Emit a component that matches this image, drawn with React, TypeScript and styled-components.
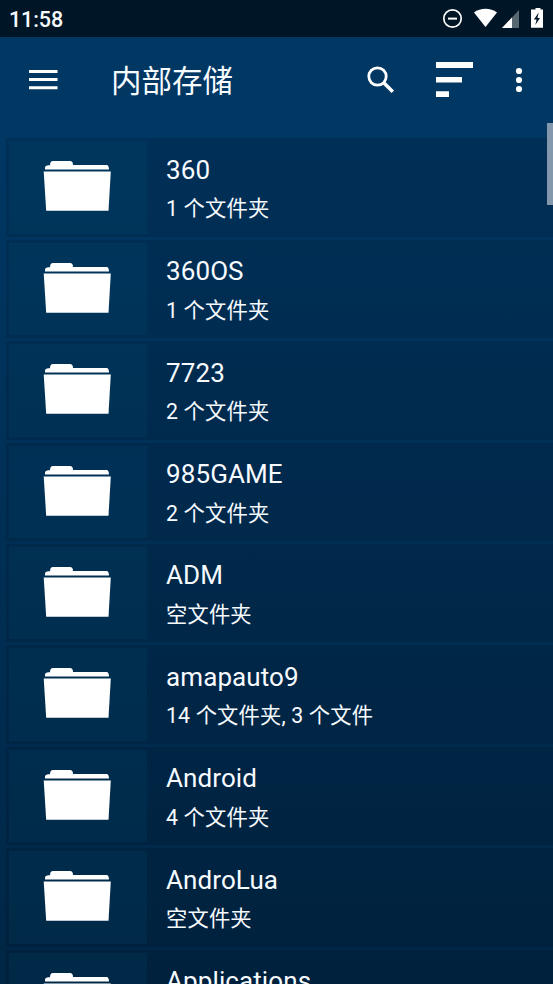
import React from "react";
import styled, { createGlobalStyle } from "styled-components";

const Global = createGlobalStyle`
  * { box-sizing: border-box; }
  html, body { margin: 0; padding: 0; overflow: hidden; }
  body { font-family: Roboto, "Noto Sans CJK SC", sans-serif; color: #f7fbff; }
  svg { display: block; }
`;

const Screen = styled.div`
  width: 553px;
  height: 984px;
  overflow: hidden;
  display: flex;
  flex-direction: column;
  position: relative;
  background: linear-gradient(180deg, #003763 0, #003763 130px, #002645 984px);
`;

const StatusBar = styled.header`
  height: 37px;
  flex: none;
  display: flex;
  align-items: center;
  justify-content: space-between;
  padding-left: 9px;
  background: #001626;
`;

const Clock = styled.span`
  font-size: 21.5px;
  font-weight: 500;
  line-height: 37px;
  letter-spacing: -0.1px;
  padding-top: 1px;
`;

const Toolbar = styled.nav`
  height: 86px;
  flex: none;
  display: flex;
  align-items: center;
  background: #003763;
`;

const Title = styled.h1`
  flex: 1;
  margin: 0;
  padding: 3px 0 0 53px;
  font-size: 30.5px;
  line-height: 44px;
  font-weight: 400;
`;

const IconButton = styled.button<{ $left?: number }>`
  border: 0;
  padding: 0;
  background: none;
  color: #fff;
  margin-left: ${(p) => p.$left ?? 0}px;
`;

const List = styled.main`
  flex: 1;
  min-height: 0;
  overflow: hidden;
  padding: 15.400px 0 0 6px;
`;

const Row = styled.section`
  height: 101.4px;
  padding-bottom: 3px;
`;

const Card = styled.div`
  height: 100%;
  display: flex;
  padding: 3px 0 3px 3px;
  background: rgba(0, 10, 20, 0.15);
`;

const Tile = styled.div`
  width: 138px;
  flex: none;
  padding: 20px 0 0 34px;
  background: rgba(0, 100, 140, 0.13);
`;

const Info = styled.div`
  padding-left: 19px;
`;

const Name = styled.div`
  font-size: 26px;
  line-height: 32px;
  margin-top: 12.5px;
  letter-spacing: 0.1px;
`;

const Detail = styled.div`
  font-size: 21.3px;
  line-height: 30px;
  margin-top: 8.500px;
  letter-spacing: 0.15px;
  white-space: pre;
`;

const ScrollThumb = styled.div`
  position: absolute;
  right: 0;
  top: 123px;
  width: 6px;
  height: 82px;
  background: #8398ad;
`;

const StatusIcons = () => (
  <svg width="123" height="37" viewBox="0 0 123 37" fill="#fff">
    <circle cx="22.5" cy="18.5" r="8.7" fill="none" stroke="#fff" strokeWidth="1.7" />
    <path d="M18 17.6h9v2h-9z" />
    <path d="M44 12.4C50.5 7.5 60.500 7.500 67 12.400L55.500 27z" />
    <path d="M72 28 89 10v18z" opacity=".35" />
    <path d="M72 28 82 17.400V28z" />
    <path d="M105.500 9.500H101v18.300h12V9.500h-2.500V8h-5z" />
    <path d="M108.700 12.500 103.900 19.400h2.700L105.300 25l4.700-7h-2.600z" fill="#001626" />
  </svg>
);

const MenuIcon = () => (
  <svg width="29" height="20" viewBox="0 0 29 20" fill="currentColor">
    <path d="M0 0h28.500v3H0zM0 8h28.500v3H0zM0 16.200h28.500v3H0z" />
  </svg>
);

const SearchIcon = () => (
  <svg width="28" height="28" viewBox="0 0 28 28" fill="none" stroke="currentColor">
    <circle cx="10.500" cy="10.500" r="8.700" strokeWidth="2.800" />
    <path d="m16.500 16.500 9.300 9.300" strokeWidth="3.500" />
  </svg>
);

const SortIcon = () => (
  <svg width="37" height="36" viewBox="0 0 37 36" fill="currentColor">
    <path d="M0 0h37v6H0zM0 15h26v5.500H0zM0 29.200h13V35H0z" />
  </svg>
);

const MoreIcon = () => (
  <svg width="8" height="26" viewBox="0 0 8 26" fill="currentColor">
    <circle cx="4" cy="4" r="3.100" />
    <circle cx="4" cy="13" r="3.100" />
    <circle cx="4" cy="22" r="3.100" />
  </svg>
);

const FolderIcon = () => (
  <svg width="69" height="51" viewBox="0 0 69 51" fill="#fff">
    <path d="M2 8.600V6.500Q2 4.700 5 4.300H7Q7 0 10 0H27Q30 0 30 4H63.500Q66 4.200 66 8.600z" />
    <path d="M.7 10.500H67.800L65.500 49.700H3.200z" />
  </svg>
);

const folders: { name: string; detail?: string }[] = [
  { name: "360", detail: "1 个文件夹" },
  { name: "360OS", detail: "1 个文件夹" },
  { name: "7723", detail: "2 个文件夹" },
  { name: "985GAME", detail: "2 个文件夹" },
  { name: "ADM", detail: "空文件夹" },
  { name: "amapauto9", detail: "14 个文件夹, 3 个文件" },
  { name: "Android", detail: "4 个文件夹" },
  { name: "AndroLua", detail: "空文件夹" },
  { name: "Applications" },
];

export default function App() {
  return (
    <>
      <Global />
      <Screen>
        <StatusBar>
          <Clock>11:58</Clock>
          <StatusIcons />
        </StatusBar>
        <Toolbar>
          <IconButton $left={29}><MenuIcon /></IconButton>
          <Title>内部存储</Title>
          <IconButton><SearchIcon /></IconButton>
          <IconButton $left={41}><SortIcon /></IconButton>
          <IconButton $left={42}><MoreIcon /></IconButton>
          <IconButton $left={30} />
        </Toolbar>
        <List>
          {folders.map(({ name, detail }) => (
            <Row key={name}>
              <Card>
                <Tile><FolderIcon /></Tile>
                <Info>
                  <Name>{name}</Name>
                  {detail && <Detail>{detail}</Detail>}
                </Info>
              </Card>
            </Row>
          ))}
        </List>
        <ScrollThumb />
      </Screen>
    </>
  );
}
